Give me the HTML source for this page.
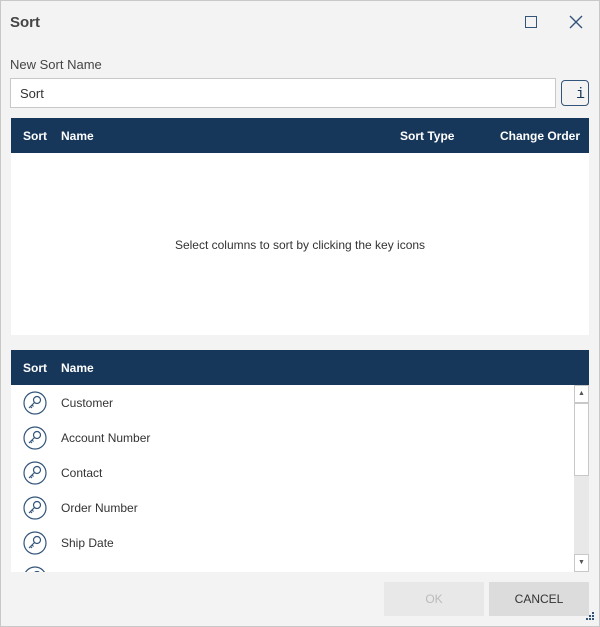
<!DOCTYPE html>
<html><head><style>
*{box-sizing:border-box;margin:0;padding:0}
body{width:600px;height:627px;background:#f3f3f3;font-family:"Liberation Sans",sans-serif;position:relative;overflow:hidden}
.a{position:absolute}
.hdr{background:#17375a;color:#fff;font-weight:bold;font-size:12px;height:35px;left:11px;width:578px}
.hdr span{position:absolute;top:11px}
.row{position:absolute;left:11px;width:563px;height:35px;font-size:12px;color:#333}
.row svg{position:absolute;left:12px;top:6px}
.row span{position:absolute;left:50px;top:11px}
</style></head><body>
<div class="a" style="left:0;top:0;width:600px;height:627px;border:1px solid #c8c8c8"></div>
<div class="a" style="left:10px;top:14px;font-size:15px;font-weight:bold;color:#444">Sort</div>
<div class="a" style="left:525px;top:16px;width:12px;height:12px;border:1.5px solid #33557a"></div>
<svg class="a" style="left:569px;top:15px" width="14" height="14"><path d="M1 1L13 13M13 1L1 13" stroke="#33557a" stroke-width="1.4"/></svg>
<div class="a" style="left:10px;top:57px;font-size:13px;color:#444">New Sort Name</div>
<div class="a" style="left:10px;top:78px;width:546px;height:30px;background:#fff;border:1px solid #c8c8c8;font-size:13px;color:#333;padding:7px 9px">Sort</div>
<div class="a" style="left:561px;top:80px;width:28px;height:26px;border:1.5px solid #33557a;border-radius:4px;color:#17375a;font-family:'Liberation Mono',monospace;font-size:15px;padding:5px 0 0 14px;line-height:18px">i</div>
<div class="a hdr" style="top:118px"><span style="left:12px">Sort</span><span style="left:50px">Name</span><span style="left:389px">Sort Type</span><span style="left:489px">Change Order</span></div>
<div class="a" style="left:11px;top:153px;width:578px;height:182px;background:#fff"></div>
<div class="a" style="left:0;width:600px;top:238px;text-align:center;font-size:12px;color:#333">Select columns to sort by clicking the key icons</div>
<div class="a hdr" style="top:350px"><span style="left:12px">Sort</span><span style="left:50px">Name</span></div>
<div class="a" style="left:11px;top:385px;width:578px;height:187px;background:#fff;overflow:hidden">
<div id="rows"></div>
</div>
<div class="a" style="left:574px;top:385px;width:15px;height:187px;background:#e8e8e8"></div>
<div class="a" style="left:574px;top:385px;width:15px;height:18px;background:#fff;border:1px solid #c8c8c8;font-size:7px;color:#555;text-align:center;line-height:16px">▲</div>
<div class="a" style="left:574px;top:403px;width:15px;height:73px;background:#fff;border:1px solid #c8c8c8"></div>
<div class="a" style="left:574px;top:554px;width:15px;height:18px;background:#fff;border:1px solid #c8c8c8;font-size:7px;color:#555;text-align:center;line-height:16px">▼</div>
<div class="a" style="left:384px;top:582px;width:100px;height:34px;background:#e8e8e8;color:#bbb;font-size:12px;text-align:center;line-height:34px">OK</div>
<div class="a" style="left:489px;top:582px;width:100px;height:34px;background:#dcdcdc;color:#333;font-size:12px;text-align:center;line-height:34px">CANCEL</div>
<svg class="a" style="left:584px;top:612px" width="12" height="12" fill="#33557a"><rect x="8" y="0" width="2" height="2"/><rect x="5" y="3" width="2" height="2"/><rect x="8" y="3" width="2" height="2"/><rect x="2" y="6" width="2" height="2"/><rect x="5" y="6" width="2" height="2"/><rect x="8" y="6" width="2" height="2"/></svg>
<script>
var n=["Customer","Account Number","Contact","Order Number","Ship Date",""],h="";
n.forEach(function(t,i){h+='<div class="row" style="top:'+(i*35)+'px;left:0"><svg width="24" height="24" viewBox="0 0 24 24" fill="none" stroke="#33557a" stroke-width="1.2"><circle cx="12" cy="12" r="11"/><circle cx="14" cy="9" r="3.5"/><path d="M11.5 11.5L6 17M7.5 15.5l1.5 1.5M9 14l1.5 1.5"/></svg><span>'+t+'</span></div>'});
document.getElementById("rows").innerHTML=h;
</script>
</body></html>
